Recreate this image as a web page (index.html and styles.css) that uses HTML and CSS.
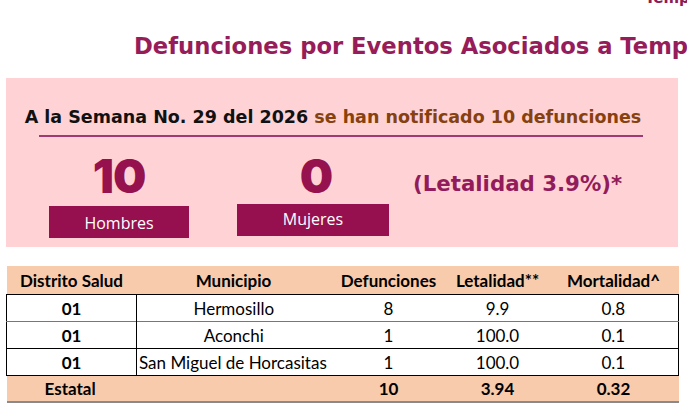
FILE: index.html
```html
<!DOCTYPE html>
<html lang="es">
<head>
<meta charset="utf-8">
<title>Defunciones por Eventos Asociados a Temperaturas</title>
<link rel="stylesheet" href="styles.css">
</head>
<body>
<div class="topcut"><span>Temporada de Calor</span></div>
<h1 class="title">Defunciones por Eventos Asociados a Temperaturas Extremas</h1>
<section class="summary">
  <div class="headline"><span class="dark">A la Semana No. 29 del 2026</span> <span class="brown">se han notificado 10 defunciones</span></div>
  <div class="rule"></div>
  <div class="stats">
    <div class="stat stat-h">
      <div class="num">10</div>
      <div class="label">Hombres</div>
    </div>
    <div class="stat stat-m">
      <div class="num">0</div>
      <div class="label label-m">Mujeres</div>
    </div>
    <div class="leta">(Letalidad 3.9%)*</div>
  </div>
</section>
<table class="tbl">
  <colgroup>
    <col class="c1"><col class="c2"><col class="c3"><col class="c4"><col class="c5">
  </colgroup>
  <thead>
    <tr><th>Distrito Salud</th><th>Municipio</th><th>Defunciones</th><th>Letalidad**</th><th>Mortalidad^</th></tr>
  </thead>
  <tbody>
    <tr><td class="b div">01</td><td>Hermosillo</td><td>8</td><td>9.9</td><td>0.8</td></tr>
    <tr><td class="b div">01</td><td>Aconchi</td><td>1</td><td>100.0</td><td>0.1</td></tr>
    <tr><td class="b div">01</td><td class="left">San Miguel de Horcasitas</td><td>1</td><td>100.0</td><td>0.1</td></tr>
  </tbody>
  <tfoot>
    <tr><td class="est">Estatal</td><td></td><td>10</td><td>3.94</td><td>0.32</td></tr>
  </tfoot>
</table>
</body>
</html>
```
FILE: styles.css
```css
html, body {
  margin: 0;
  padding: 0;
  background: #ffffff;
  width: 687px;
  height: 409px;
  overflow: hidden;
}
body {
  font-family: "Open Sans", "Liberation Sans", sans-serif;
}
.topcut {
  height: 7px;
  overflow: hidden;
  white-space: nowrap;
  padding-left: 645px;
}
.topcut span {
  display: block;
  font-family: "DejaVu Sans", sans-serif;
  font-weight: 700;
  font-size: 15px;
  line-height: 16px;
  margin-top: -10px;
  color: #8e1a56;
}
.title {
  margin: 24px 0 0 0;
  padding-left: 134px;
  white-space: nowrap;
  overflow: hidden;
  font-family: "DejaVu Sans", sans-serif;
  font-size: 22.7px;
  line-height: 30px;
  font-weight: 700;
  color: #961c5a;
  height: 30px;
}
.summary {
  margin: 17px 9px 0 6px;
  height: 169px;
  background: #ffd3d5;
  box-sizing: border-box;
  padding-top: 27px;
}
.headline {
  text-align: center;
  white-space: nowrap;
  font-family: "DejaVu Sans", sans-serif;
  font-size: 17.5px;
  line-height: 24px;
  font-weight: 700;
  padding-right: 18px;
}
.dark { color: #111111; }
.brown { color: #86410f; }
.rule {
  height: 1.5px;
  background: #a03a72;
  margin: 6px 35px 0 33px;
}
.stats {
  display: flex;
  align-items: flex-start;
  margin-top: 13px;
}
.stat {
  display: flex;
  flex-direction: column;
  align-items: center;
}
.stat-h { margin-left: 43px; width: 140px; }
.stat-m { margin-left: 48px; width: 152px; }
.num {
  font-family: Inter, "Liberation Sans", sans-serif;
  font-weight: 900;
  font-size: 47px;
  line-height: 52px;
  color: #96124f;
  letter-spacing: -1px;
}
.stat-m .num { padding-left: 6px; }
.label {
  margin-top: 4px;
  width: 100%;
  height: 32px;
  background: #96104f;
  color: #ffffff;
  font-size: 16px;
  line-height: 34px;
  text-align: center;
}
.label-m {
  margin-top: 2px;
  line-height: 30px;
}
.leta {
  margin-left: 24px;
  margin-top: 21px;
  font-family: "DejaVu Sans", sans-serif;
  font-size: 21.3px;
  line-height: 26px;
  font-weight: 700;
  color: #921b5c;
}
.tbl {
  margin: 19px 0 0 6px;
  width: 672px;
  border-collapse: collapse;
  table-layout: fixed;
  font-family: Lato, "Liberation Sans", sans-serif;
  font-size: 17px;
  color: #000000;
}
.c1 { width: 130px; }
.c2 { width: 194px; }
.c3 { width: 116px; }
.c4 { width: 102px; }
.c5 { width: 130px; }
.tbl th {
  background: #f8cbad;
  height: 28px;
  padding: 0;
  font-weight: 700;
  text-align: center;
  border-bottom: 1px solid #000;
  white-space: nowrap;
}
.tbl td {
  height: 27px;
  padding: 0;
  text-align: center;
  white-space: nowrap;
  box-sizing: border-box;
}
.tbl tbody tr {
  background: #ffffff;
  border-left: 1px solid #000;
  border-right: 1px solid #000;
  border-bottom: 1px solid #000;
}
.tbl tbody tr:first-child {
  border-bottom: 1px solid #777;
}
.tbl td.b { font-weight: 700; }
.tbl td.div { border-right: 1px solid #000; }
.tbl td.left { text-align: left; padding-left: 2px; }
.tbl tfoot tr {
  background: #f8cbad;
  border-bottom: 2px solid #8a8a8a;
}
.tbl tfoot td { font-weight: 700; height: 26px; }
.tbl tfoot td.est { text-align: left; padding-left: 38px; }
```
